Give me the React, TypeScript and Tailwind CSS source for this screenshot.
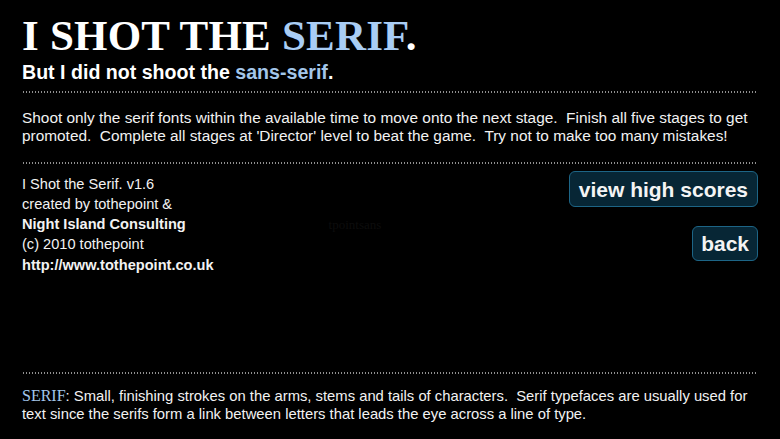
import React from "react";

const dots = "h-[2px] w-full bg-[radial-gradient(circle,#8f8f8f_45%,transparent_55%)] bg-[length:3px_2px]";

export default function App() {
  return (
    <div className="flex h-[439px] w-[780px] flex-col overflow-hidden bg-black px-[22px] text-white font-['Liberation_Sans',Arial,sans-serif]">
      {/* Title */}
      <h1 className="mt-[14px] font-['Liberation_Serif','Times_New_Roman',serif] text-[43px] font-bold leading-[44px] tracking-[0.2px]">
        I SHOT THE <span className="text-[#a9cdf4]">SERIF</span>.
      </h1>
      <p className="mt-[3px] text-[19.6px] font-bold leading-[22px]">
        But I did not shoot the <span className="text-[#a3c6ea]">sans-serif</span>.
      </p>
      <div className={`mt-[8px] ${dots}`} />

      {/* Intro */}
      <p className="mt-[16px] w-[740px] font-['Liberation_Sans_Narrow','Liberation_Sans',sans-serif] text-[15.4px] leading-[18px] text-[#f2f2f2]">
        Shoot only the serif fonts within the available time to move onto the next stage.&nbsp; Finish all five stages to get
        promoted.&nbsp; Complete all stages at 'Director' level to beat the game.&nbsp; Try not to make too many mistakes!
      </p>
      <div className={`mt-[17px] ${dots}`} />

      {/* Credits + buttons */}
      <div className="mt-[7px] flex justify-between">
        <div className="pt-[3px] text-[14.6px] leading-[20px] text-[#f2f2f2]">
          <div>I Shot the Serif. v1.6</div>
          <div>created by tothepoint &amp;</div>
          <div className="font-bold">Night Island Consulting</div>
          <div>(c) 2010 tothepoint</div>
          <div className="mt-[1px] font-bold">http://www.tothepoint.co.uk</div>
        </div>
        <div className="flex-1 pl-[115px] pt-[44px] font-['Liberation_Serif',serif] text-[13px] text-[#0d0d0d]">
          tpointsans
        </div>
        <div className="flex flex-col items-end gap-[19px]">
          <button className="h-[36px] rounded-[6px] border border-[#1d6586] bg-[#072635] px-[9px] text-[21px] font-bold leading-none text-[#f4f4f4]">
            view high scores
          </button>
          <button className="h-[35px] rounded-[6px] border border-[#1d6586] bg-[#072635] px-[8px] text-[21px] font-bold leading-none text-[#f4f4f4]">
            back
          </button>
        </div>
      </div>

      {/* Definition */}
      <div className={`mt-auto ${dots}`} />
      <p className="mb-[16px] mt-[13px] font-['Liberation_Sans_Narrow','Liberation_Sans',sans-serif] text-[14.8px] leading-[18px] text-[#f2f2f2]">
        <span className="font-['Liberation_Serif',serif] text-[16px] leading-none text-[#a3c6ea]">SERIF</span>: Small, finishing strokes on the arms, stems and tails of characters.&nbsp; Serif typefaces are usually used for
        text since the serifs form a link between letters that leads the eye across a line of type.
      </p>
    </div>
  );
}
